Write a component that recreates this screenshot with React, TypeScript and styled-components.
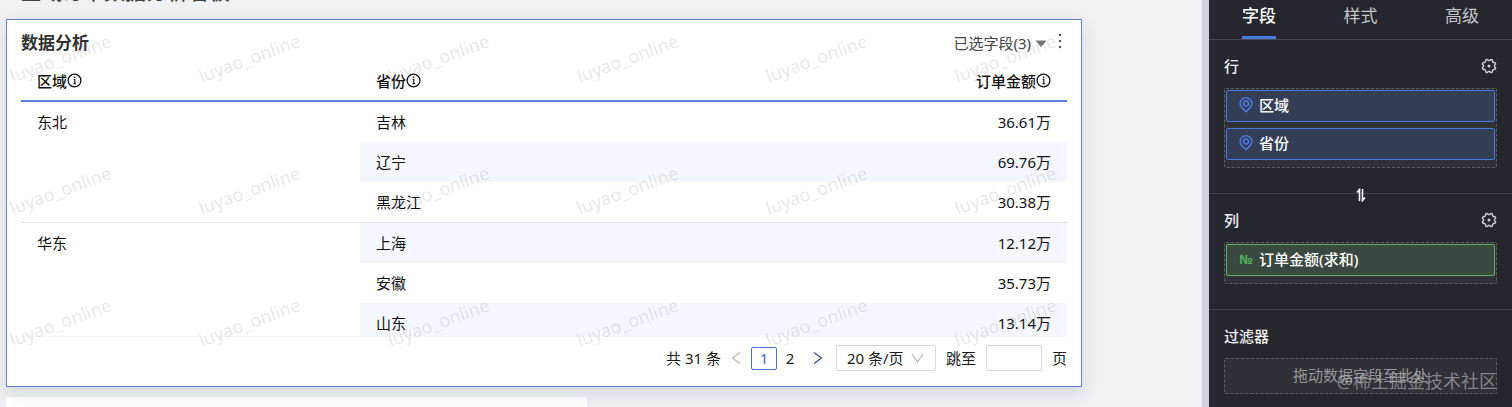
import React from "react";
import styled, { createGlobalStyle } from "styled-components";

const Global = createGlobalStyle`
  *, *::before, *::after { box-sizing: border-box; }
  body {
    margin: 0;
    background: #eff1f5;
    font-family: "Noto Sans", "Noto Sans CJK SC", sans-serif;
    font-size: 15px;
    line-height: 20px;
    color: #1a1a1a;
  }
  button, input, select { font: inherit; color: inherit; margin: 0; }
  button { padding: 0; border: 0; background: none; cursor: pointer; }
`;

const Page = styled.div`
  display: flex;
  height: 100vh;
  overflow: hidden;
`;

const Canvas = styled.main`
  flex: 1;
  min-width: 0;
  display: flex;
  flex-direction: column;
  padding: 0 120px 0 6px;
  overflow: hidden;
`;

const BoardTitle = styled.header`
  flex: none;
  height: 19px;
  display: flex;
  align-items: flex-end;
  overflow: hidden;
  padding: 0 0 16px 14px;

  h1 { margin: 0; font-size: 21px; line-height: 24px; font-weight: 500; color: #444; }
`;

const Card = styled.section`
  position: relative;
  flex: none;
  height: 368px;
  display: flex;
  flex-direction: column;
  padding: 11px 14px 15px;
  background: #fff;
  border: 1px solid #5b86d8;
  box-shadow: 0 6px 16px rgba(30, 40, 70, 0.14);
`;

const NextCard = styled.section`
  flex: none;
  width: 54%;
  height: 120px;
  margin-top: 10px;
  background: #fff;
  border-radius: 2px;
`;

const CardHead = styled.div`
  display: flex;
  align-items: center;
  justify-content: space-between;
  height: 24px;

  h2 { margin: 0; font-size: 17px; line-height: 24px; font-weight: 700; color: #333; }
`;

const CardTools = styled.div`
  display: flex;
  align-items: center;
  gap: 6px;
  color: #444;
`;

const FieldPicker = styled.button`
  display: flex;
  align-items: center;
  gap: 4px;
`;

const MoreButton = styled.button`
  display: flex;
  width: 14px;
  justify-content: center;
  padding-bottom: 4px;
`;

const TableWrap = styled.div`
  flex: 1;
  min-height: 0;
  overflow: hidden;
  margin-bottom: 8px;
  border-bottom: 1px solid #f7f7f8;
`;

const DataTable = styled.table`
  width: 100%;
  table-layout: fixed;
  border-collapse: separate;
  border-spacing: 0;
  color: #111;
`;

const HeadCell = styled.th<{ $end?: boolean; $w?: string }>`
  width: ${(p) => p.$w || "auto"};
  height: 47px;
  padding: 6px 16px 0;
  font-weight: 500;
  text-align: ${(p) => (p.$end ? "right" : "left")};
  border-bottom: 2px solid #5b82d6;

  svg { vertical-align: -1px; }
`;

const Cell = styled.td<{ $end?: boolean; $striped?: boolean; $last?: boolean }>`
  height: ${(p) => (p.$last ? 41 : 40)}px;
  padding: 0 16px;
  vertical-align: ${(p) => (p.rowSpan ? "top" : "middle")};
  ${(p) => p.rowSpan && "padding-top: 10px;"}
  text-align: ${(p) => (p.$end ? "right" : "left")};
  background: ${(p) => (p.$striped ? "#f4f7fe" : "transparent")};
  border-bottom: ${(p) => (p.$last ? "1px solid #e2e2e4" : "0")};
`;

const Pagination = styled.nav`
  display: flex;
  align-items: center;
  justify-content: flex-end;
  height: 26px;
  white-space: nowrap;
`;

const PageButton = styled.button<{ $active?: boolean }>`
  display: flex;
  align-items: center;
  justify-content: center;
  width: 26px;
  height: 23px;
  border: 1px solid ${(p) => (p.$active ? "#4470dc" : "transparent")};
  border-radius: 2px;
  color: ${(p) => (p.$active ? "#3f6bdc" : "#1a1a1a")};
`;

const StepButton = styled.button`
  display: flex;
  align-items: center;
  justify-content: center;
  width: 16px;
  height: 24px;
  margin: 0 7px;
  &:disabled { cursor: default; }
`;

const SizePicker = styled.label`
  position: relative;
  display: flex;
  align-items: center;
  margin: 0 10px 0 3px;

  select {
    appearance: none;
    width: 100px;
    height: 26px;
    padding: 0 0 0 10px;
    border: 1px solid #d6d6d8;
    border-radius: 2px;
    background: #fff;
  }
  svg { position: absolute; right: 12px; pointer-events: none; }
`;

const Jump = styled.label`
  display: flex;
  align-items: center;
  gap: 10px;

  input {
    width: 56px;
    height: 26px;
    border: 1px solid #d6d6d8;
    border-radius: 2px;
    background: transparent;
  }
`;

const Watermarks = styled.div`
  position: absolute;
  inset: 0;
  overflow: hidden;
  pointer-events: none;
  color: rgba(60, 60, 60, 0.13);
  font-size: 18px;
`;

const WatermarkRow = styled.div`
  display: flex;
  height: 132px;
`;

const Watermark = styled.span`
  flex: none;
  width: 189px;
  padding: 28px 0 0;

  span { display: inline-block; transform: rotate(-20deg); }
`;

const Panel = styled.aside`
  position: relative;
  flex: none;
  width: 310px;
  background: #26272e;
  border-left: 7px solid #cfd2dd;
  color: #f0f0f2;
`;

const Tabs = styled.div`
  display: flex;
  justify-content: space-between;
  height: 40px;
  padding: 0 33px;
  border-bottom: 1px solid #48494e;
`;

const Tab = styled.button<{ $active?: boolean }>`
  height: 39px;
  padding: 0 0 4px;
  font-size: 17px;
  font-weight: ${(p) => (p.$active ? 500 : 400)};
  color: ${(p) => (p.$active ? "#fff" : "#c4c4c8")};
  border-bottom: 3px solid ${(p) => (p.$active ? "#4a78dc" : "transparent")};
`;

const Group = styled.section<{ $h?: number }>`
  position: relative;
  height: ${(p) => (p.$h ? `${p.$h}px` : "auto")};
  padding: 16px 15px 0;
  border-bottom: ${(p) => (p.$h ? "1px solid #414246" : "0")};
`;

const GroupHead = styled.div`
  display: flex;
  align-items: center;
  justify-content: space-between;
  height: 20px;
  margin-bottom: 12px;

  h3 { margin: 0; font-size: 15px; line-height: 20px; font-weight: 500; }
  button { display: flex; }
`;

const DropZone = styled.div<{ $empty?: boolean }>`
  display: flex;
  flex-direction: column;
  gap: 6px;
  padding: ${(p) => (p.$empty ? "6px 7px 8px" : "1px 1px 7px")};
  background: #303136;
  border: 1px dashed #5c5d62;
  border-radius: 2px;
  text-align: center;
  color: #96979b;
`;

const Chip = styled.div<{ $measure?: boolean }>`
  display: flex;
  align-items: center;
  gap: 5px;
  height: 32px;
  padding: 0 11px 2px;
  color: #fff;
  font-weight: 500;
  background: ${(p) => (p.$measure ? "#39493f" : "#353e57")};
  border: 1px solid ${(p) => (p.$measure ? "#5cae62" : "#4a78dc")};
  border-radius: 2px;
`;

const ChipIcon = styled.span`
  display: flex;
  justify-content: center;
  width: 16px;
  font-family: "Open Sans", "Noto Sans", sans-serif;
  font-size: 13px;
  font-weight: 700;
  color: #56ad5d;
`;

const SwapButton = styled.button`
  position: absolute;
  left: 50%;
  bottom: -9px;
  width: 12px;
  height: 14px;
  margin-left: -6px;
  display: flex;
`;

const SiteMark = styled.span`
  position: absolute;
  right: 15px;
  bottom: 14px;
  font-size: 18px;
  line-height: 24px;
  color: rgba(190, 190, 195, 0.6);
  white-space: nowrap;
`;

const InfoIcon = () => (
  <svg width="15" height="15" viewBox="0 0 15 15" fill="none" stroke="#111" strokeWidth="1.3">
    <circle cx="7.5" cy="7.500" r="6.4" />
    <path d="M6.600 6.500h1.200v4M6.300 10.700h2.800" strokeWidth="1.100" />
    <circle cx="7.600" cy="4.300" r="0.900" fill="#111" stroke="none" />
  </svg>
);

// Outline of a cog with eight rounded teeth round the centre (8, 8).
const cogPath =
  Array.from({ length: 96 }, (_, i) => {
    const a = (i / 96) * Math.PI * 2;
    const wave = Math.max(-1, Math.min(1, -1.8 * Math.cos(8 * a)));
    const r = 6.2 + 0.7 * wave;
    return `${i ? "L" : "M"}${(8 + r * Math.cos(a)).toFixed(2)} ${(8 + r * Math.sin(a)).toFixed(2)}`;
  }).join("") + "z";

const GearIcon = () => (
  <svg width="16" height="16" viewBox="0 0 16 16" fill="none" stroke="#d0d0d2" strokeWidth="1.4" strokeLinejoin="round">
    <path d={cogPath} />
    <circle cx="8" cy="8" r="1.5" fill="#d0d0d2" stroke="none" />
  </svg>
);

const PinIcon = () => (
  <svg width="14" height="16" viewBox="0 0 14 16" fill="none" stroke="#4a78e4" strokeWidth="1.5">
    <path d="M7 14.6C3.400 11.700 1.100 9.200 1.100 6.500a5.900 5.700 0 0 1 11.800 0c0 2.700-2.300 5.200-5.900 8.100z" />
    <circle cx="7" cy="6.500" r="2.500" />
  </svg>
);

const Chevron = ({ d, color, w = 10, h = 14 }: { d: string; color: string; w?: number; h?: number }) => (
  <svg width={w} height={h} viewBox={`0 0 ${w} ${h}`} fill="none" stroke={color} strokeWidth="1.3">
    <path d={d} />
  </svg>
);

const regions = [
  { name: "东北", rows: [["吉林", "36.61万"], ["辽宁", "69.76万"], ["黑龙江", "30.38万"]] },
  { name: "华东", rows: [["上海", "12.12万"], ["安徽", "35.73万"], ["山东", "13.14万"]] },
];

export default function App() {
  let line = 0;
  return (
    <>
      <Global />
      <Page>
        <Canvas>
          <BoardTitle>
            <h1>区域订单数据分析看板</h1>
          </BoardTitle>
          <Card>
            <CardHead>
              <h2>数据分析</h2>
              <CardTools>
                <FieldPicker>
                  已选字段(3)
                  <svg width="12" height="7" viewBox="0 0 12 7"><path d="M0.5 0.5h11L6 7z" fill="#777" /></svg>
                </FieldPicker>
                <MoreButton aria-label="更多">
                  <svg width="4" height="16" viewBox="0 0 4 16" fill="#555">
                    <circle cx="2" cy="2" r="1.2" /><circle cx="2" cy="8" r="1.2" /><circle cx="2" cy="14" r="1.2" />
                  </svg>
                </MoreButton>
              </CardTools>
            </CardHead>
            <TableWrap>
              <DataTable>
                <thead>
                  <tr>
                    <HeadCell $w="32.4%">区域<InfoIcon /></HeadCell>
                    <HeadCell>省份<InfoIcon /></HeadCell>
                    <HeadCell $end>订单金额<InfoIcon /></HeadCell>
                  </tr>
                </thead>
                <tbody>
                  {regions.map((region) =>
                    region.rows.map(([province, amount], i) => {
                      const striped = line++ % 2 === 1;
                      const last = i === region.rows.length - 1;
                      return (
                        <tr key={province}>
                          {i === 0 && <Cell rowSpan={region.rows.length} $last>{region.name}</Cell>}
                          <Cell $striped={striped} $last={last}>{province}</Cell>
                          <Cell $striped={striped} $last={last} $end>{amount}</Cell>
                        </tr>
                      );
                    })
                  )}
                </tbody>
              </DataTable>
            </TableWrap>
            <Pagination aria-label="分页">
              <span>共 31 条</span>
              <StepButton disabled aria-label="上一页"><Chevron d="M9 1.5 1.5 7 9 12.5" color="#bbb" /></StepButton>
              <PageButton $active>1</PageButton>
              <PageButton>2</PageButton>
              <StepButton aria-label="下一页"><Chevron d="M1 1.5 8.5 7 1 12.5" color="#2f4f9c" /></StepButton>
              <SizePicker>
                <select aria-label="每页条数"><option>20 条/页</option></select>
                <Chevron d="M1 1l5.5 8L12 1" color="#bbb" w={13} h={10} />
              </SizePicker>
              <Jump>跳至<input type="text" />页</Jump>
            </Pagination>
            <Watermarks aria-hidden="true">
              {[0, 1, 2].map((r) => (
                <WatermarkRow key={r}>
                  {[0, 1, 2, 3, 4, 5].map((c) => (
                    <Watermark key={c}><span>luyao_online</span></Watermark>
                  ))}
                </WatermarkRow>
              ))}
            </Watermarks>
          </Card>
          <NextCard />
        </Canvas>
        <Panel>
          <Tabs>
            <Tab $active>字段</Tab>
            <Tab>样式</Tab>
            <Tab>高级</Tab>
          </Tabs>
          <Group $h={154}>
            <GroupHead><h3>行</h3><button aria-label="行设置"><GearIcon /></button></GroupHead>
            <DropZone>
              <Chip><ChipIcon><PinIcon /></ChipIcon>区域</Chip>
              <Chip><ChipIcon><PinIcon /></ChipIcon>省份</Chip>
            </DropZone>
            <SwapButton aria-label="交换行列">
              <svg width="12" height="14" viewBox="0 0 12 14" fill="none" stroke="#fff" strokeWidth="1.6">
                <path d="M4.500 13V1.500L2 4.500M7.500 1v11.500l2.500-3" />
              </svg>
            </SwapButton>
          </Group>
          <Group $h={116}>
            <GroupHead><h3>列</h3><button aria-label="列设置"><GearIcon /></button></GroupHead>
            <DropZone>
              <Chip $measure><ChipIcon>№</ChipIcon>订单金额(求和)</Chip>
            </DropZone>
          </Group>
          <Group>
            <GroupHead><h3>过滤器</h3></GroupHead>
            <DropZone $empty>拖动数据字段至此处</DropZone>
          </Group>
          <SiteMark>@稀土掘金技术社区</SiteMark>
        </Panel>
      </Page>
    </>
  );
}
